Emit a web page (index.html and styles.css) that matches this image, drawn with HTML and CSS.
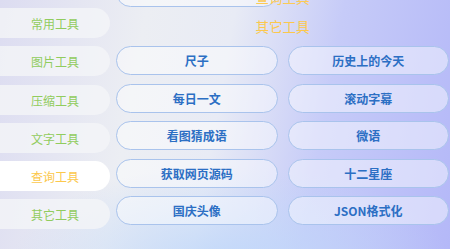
FILE: index.html
```html
<!DOCTYPE html>
<html lang="zh-CN">
<head>
    <meta charset="UTF-8">
    <meta name="viewport" content="width=device-width, initial-scale=1.0">
    <title>工具箱</title>
    <link rel="stylesheet" href="styles.css">
</head>
<body>
    <div class="app">
        <div class="sidebar">
            <div class="tab">常用工具</div>
            <div class="tab">图片工具</div>
            <div class="tab">压缩工具</div>
            <div class="tab">文字工具</div>
            <div class="tab active">查询工具</div>
            <div class="tab">其它工具</div>
        </div>
        <div class="content">
            <div class="sticky-title">查询工具</div>
            <div class="tools">
                <button class="tool">手机号归属地</button>
                <div class="section-title">其它工具</div>
                <button class="tool">尺子</button>
                <button class="tool">历史上的今天</button>
                <button class="tool">每日一文</button>
                <button class="tool">滚动字幕</button>
                <button class="tool">看图猜成语</button>
                <button class="tool">微语</button>
                <button class="tool">获取网页源码</button>
                <button class="tool">十二星座</button>
                <button class="tool">国庆头像</button>
                <button class="tool">JSON格式化</button>
            </div>
        </div>
    </div>
</body>
</html>
```

FILE: styles.css
```css
* {
    margin: 0;
    padding: 0;
    box-sizing: border-box;
    font-family: 'Noto Sans CJK SC', 'Noto Sans', sans-serif;
}

body {
    width: 450px;
    height: 249px;
    overflow: hidden;
    background:
        radial-gradient(ellipse 220px 100px at 230px 265px, rgba(192, 216, 250, 0.95), rgba(192, 216, 250, 0) 100%),
        linear-gradient(100deg, #dcdcf1 0%, #eceef3 30%, #e8ebf5 48%, #c6cbf8 70%, #b4b8f8 100%);
}

.app {
    display: flex;
    height: 100%;
}

.sidebar {
    width: 110px;
    flex-shrink: 0;
    display: flex;
    flex-direction: column;
    gap: 8.3px;
    padding-top: 8px;
}

.tab {
    height: 30px;
    line-height: 31px;
    text-align: center;
    font-size: 12px;
    color: #91cc5e;
    background: rgba(244, 245, 248, 0.8);
    border-radius: 0 15px 15px 0;
}

.tab.active {
    background: #ffffff;
    color: #fcc84c;
}

.content {
    flex: 1;
    position: relative;
    padding: 0 1px 0 6px;
    overflow: hidden;
}

.sticky-title {
    position: absolute;
    top: -10px;
    left: 6px;
    right: 1px;
    text-align: center;
    font-size: 13.5px;
    line-height: 14px;
    color: #fcca55;
}

.tools {
    display: grid;
    grid-template-columns: 1fr 1fr;
    column-gap: 10px;
    row-gap: 8.5px;
    margin-top: -22px;
}

.section-title {
    grid-column: 1 / -1;
    order: 1;
    height: 22px;
    line-height: 20px;
    text-align: center;
    font-size: 13.5px;
    color: #fcc84c;
}

.tool {
    order: 2;
    height: 29px;
    border: 1px solid #a9c3ec;
    border-radius: 15px;
    background: rgba(255, 255, 255, 0.45);
    color: #2c6fc4;
    font-size: 12px;
    font-weight: 600;
    cursor: pointer;
}

.tool:first-child {
    order: 0;
}
```
